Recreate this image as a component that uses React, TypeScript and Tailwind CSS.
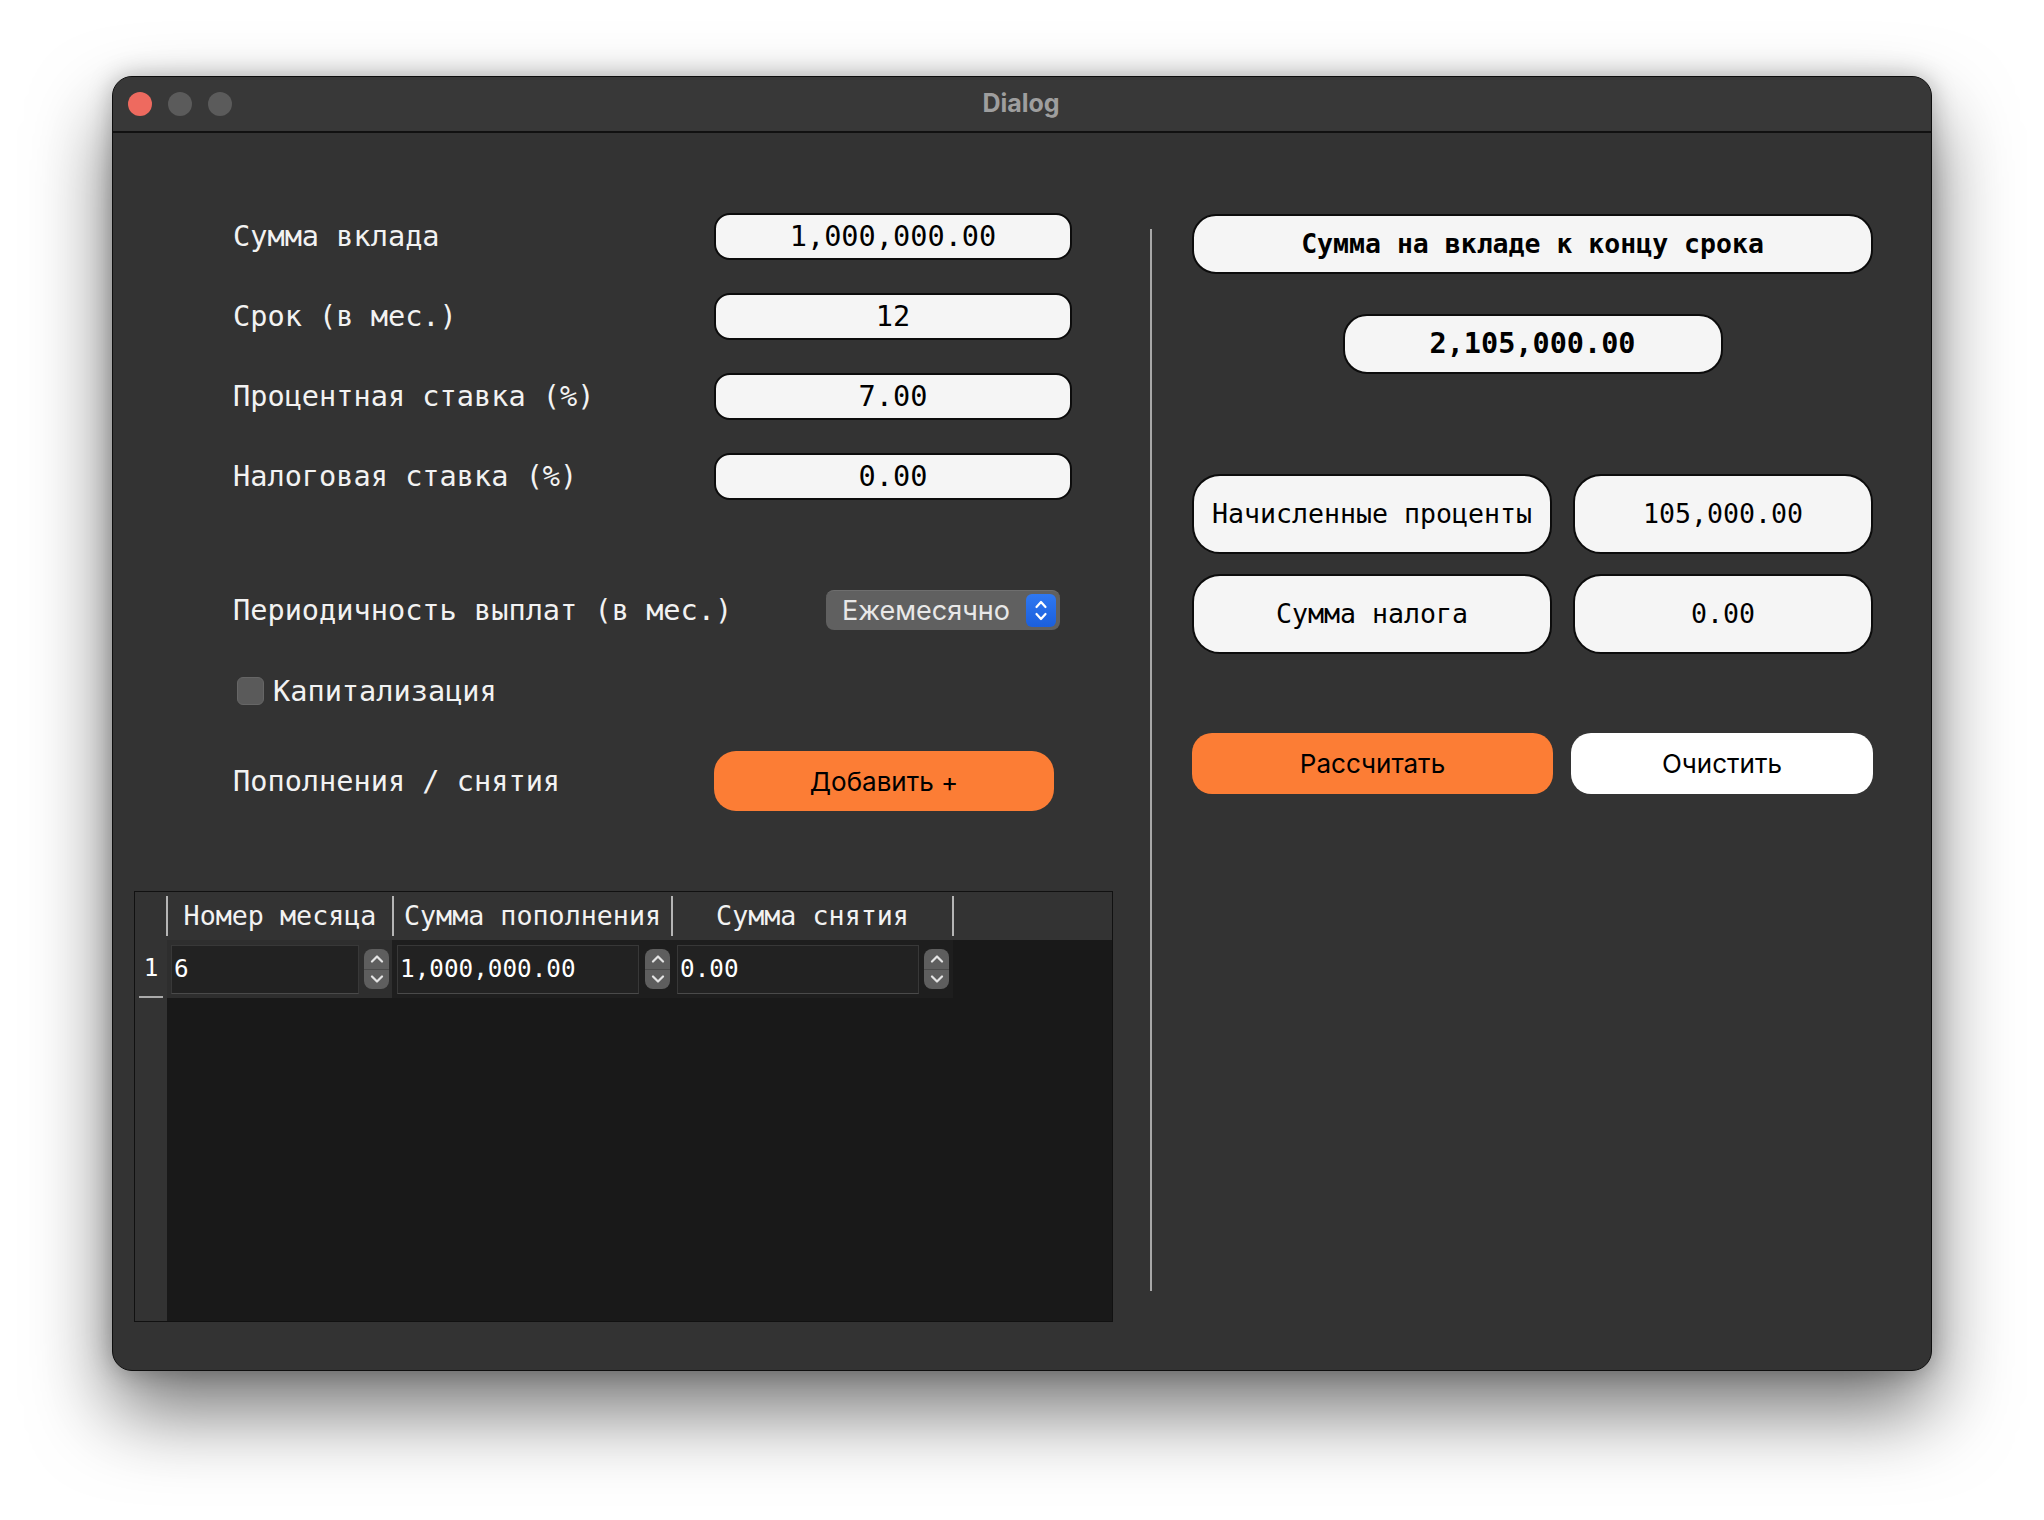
import React from "react";

const mono = "font-['DejaVu_Sans_Mono','Liberation_Mono',monospace]";
const sans = "font-['Inter','Noto_Sans',sans-serif]";

const Field = ({ label, value }: { label: string; value: string }) => (
  <div className="flex items-center h-[47px]">
    <span className="w-[481px] text-[28.6px] text-[#f2f2f2] whitespace-pre">{label}</span>
    <div className="w-[358px] h-[47px] rounded-[16px] border-2 border-[#0c0c0c] bg-[#f5f5f5] flex items-center justify-center text-[28.6px] text-black leading-none">
      {value}
    </div>
  </div>
);

const SpinButtons = () => (
  <div className="w-[25px] h-[40px] rounded-[8px] bg-[#5e5e5e] flex flex-col overflow-hidden">
    <div className="flex-1 flex items-center justify-center border-b border-[#4a4a4a]">
      <svg width="14" height="9" viewBox="0 0 14 9" fill="none">
        <path d="M2 7.5L7 2.5L12 7.5" stroke="#e4e4e4" strokeWidth="2.2" strokeLinecap="round" strokeLinejoin="round" />
      </svg>
    </div>
    <div className="flex-1 flex items-center justify-center">
      <svg width="14" height="9" viewBox="0 0 14 9" fill="none">
        <path d="M2 1.5L7 6.5L12 1.5" stroke="#e4e4e4" strokeWidth="2.2" strokeLinecap="round" strokeLinejoin="round" />
      </svg>
    </div>
  </div>
);

const Editor = ({ value, w }: { value: string; w: string }) => (
  <div className={`${w} h-[49px] bg-[#222] border border-[#383838] border-b-[#4a4a4a] flex items-center pl-[2px] text-[24.3px] text-white`}>
    {value}
  </div>
);

const Box = ({ children, className }: { children: React.ReactNode; className: string }) => (
  <div className={`border-2 border-[#0c0c0c] bg-[#f5f5f5] flex items-center justify-center text-black leading-none whitespace-pre ${className}`}>
    {children}
  </div>
);

export default function App() {
  return (
    <div className={`w-[2044px] h-[1520px] bg-white pl-[112px] pt-[76px] ${mono}`}>
      <div className="w-[1820px] h-[1295px] rounded-[20px] border border-[#0e0e0e] bg-[#333333] shadow-[0_40px_80px_rgba(0,0,0,0.55),0_0_24px_rgba(0,0,0,0.25)] flex flex-col overflow-hidden">
        {/* title bar */}
        <div className="relative h-[56px] shrink-0 bg-[#383838] border-b-2 border-[#111] flex items-center justify-center">
          <div className="absolute left-[15px] top-[15px] flex gap-[16px]">
            <div className="w-[24px] h-[24px] rounded-full bg-[#ee6a5f]" />
            <div className="w-[24px] h-[24px] rounded-full bg-[#5b5b5b]" />
            <div className="w-[24px] h-[24px] rounded-full bg-[#5b5b5b]" />
          </div>
          <span className={`${sans} text-[25px] font-bold text-[#9e9e9e] -ml-[2px]`}>Dialog</span>
        </div>

        {/* content */}
        <div className="flex flex-1">
          {/* left */}
          <div className="w-[1037px] pl-[21px] flex flex-col">
            <div className="pl-[99px] pt-[80px] flex flex-col">
              <Field label="Сумма вклада" value="1,000,000.00" />
              <div className="mt-[33px]">
                <Field label="Срок (в мес.)" value="12" />
              </div>
              <div className="mt-[33px]">
                <Field label="Процентная ставка (%)" value="7.00" />
              </div>
              <div className="mt-[33px]">
                <Field label="Налоговая ставка (%)" value="0.00" />
              </div>

              <div className="mt-[90px] flex items-center h-[40px]">
                <span className="w-[593px] text-[28.6px] text-[#f2f2f2] whitespace-pre">Периодичность выплат (в мес.)</span>
                <div className="w-[234px] h-[40px] rounded-[8px] bg-[#606060] border-t border-[#6e6e6e] flex items-center pl-[16px] pr-[4px]">
                  <span className={`${sans} flex-1 text-[27px] text-[#e8e8e8] leading-none`}>Ежемесячно</span>
                  <div className="w-[30px] h-[33px] rounded-[6px] bg-gradient-to-b from-[#2f78f2] to-[#1b5fdc] flex flex-col items-center justify-center gap-[3px]">
                    <svg width="14" height="10" viewBox="0 0 14 10" fill="none">
                      <path d="M2.5 8L7 3L11.5 8" stroke="white" strokeWidth="2.2" strokeLinecap="round" strokeLinejoin="round" />
                    </svg>
                    <svg width="14" height="10" viewBox="0 0 14 10" fill="none">
                      <path d="M2.5 2L7 7L11.5 2" stroke="white" strokeWidth="2.2" strokeLinecap="round" strokeLinejoin="round" />
                    </svg>
                  </div>
                </div>
              </div>

              <div className="mt-[47px] flex items-center h-[28px]">
                <div className="ml-[4px] w-[27px] h-[28px] rounded-[6px] bg-[#5a5a5a] border border-[#666]" />
                <span className="ml-[9px] text-[28.6px] text-[#f2f2f2]">Капитализация</span>
              </div>

              <div className="mt-[46px] flex items-center h-[60px]">
                <span className="w-[481px] text-[28.6px] text-[#f2f2f2] whitespace-pre">Пополнения / снятия</span>
                <button className={`${sans} w-[340px] h-[60px] rounded-[22px] bg-[#fc7d35] text-[26px] text-black`}>
                  Добавить +
                </button>
              </div>
            </div>

            {/* table */}
            <div className="mt-[80px] w-[979px] h-[431px] border border-[#111] bg-[#191919] flex flex-col">
              <div className="h-[48px] shrink-0 bg-[#333] flex items-center">
                <div className="w-[31px]" />
                <div className="w-[2px] h-[40px] bg-[#b5b5b5]" />
                <div className="w-[224px] text-center text-[26.7px] text-[#f2f2f2]">Номер месяца</div>
                <div className="w-[2px] h-[40px] bg-[#b5b5b5]" />
                <div className="w-[277px] text-center text-[26.7px] text-[#f2f2f2]">Сумма пополнения</div>
                <div className="w-[2px] h-[40px] bg-[#b5b5b5]" />
                <div className="w-[279px] text-center text-[26.7px] text-[#f2f2f2]">Сумма снятия</div>
                <div className="w-[2px] h-[40px] bg-[#b5b5b5]" />
              </div>
              <div className="flex flex-1">
                <div className="w-[32px] bg-[#333] flex flex-col items-center">
                  <div className="h-[56px] flex items-center text-[24.3px] text-white">1</div>
                  <div className="w-[24px] h-[2px] bg-[#aaa]" />
                </div>
                <div className="flex h-[58px]">
                  <div className="w-[225px] bg-[#2e2e2e] flex items-center pl-[4px] gap-[5px]">
                    <Editor value="6" w="w-[188px]" />
                    <SpinButtons />
                  </div>
                  <div className="w-[280px] bg-[#1e1e1e] flex items-center pl-[5px] gap-[6px]">
                    <Editor value="1,000,000.00" w="w-[242px]" />
                    <SpinButtons />
                  </div>
                  <div className="w-[281px] bg-[#1e1e1e] flex items-center pl-[5px] gap-[5px]">
                    <Editor value="0.00" w="w-[242px]" />
                    <SpinButtons />
                  </div>
                </div>
              </div>
            </div>
          </div>

          {/* separator */}
          <div className="w-[2px] mt-[96px] h-[1062px] bg-[#a8a8a8]" />

          {/* right */}
          <div className="pl-[40px] w-[721px] flex flex-col">
            <Box className="mt-[81px] h-[60px] rounded-[24px] text-[26.5px] font-bold">Сумма на вкладе к концу срока</Box>
            <Box className="mt-[40px] self-center w-[380px] h-[60px] rounded-[24px] text-[28.5px] font-bold">2,105,000.00</Box>
            <div className="mt-[100px] flex gap-[21px]">
              <Box className="w-[360px] h-[80px] rounded-[28px] text-[26.6px]">Начисленные проценты</Box>
              <Box className="w-[300px] h-[80px] rounded-[28px] text-[26.6px]">105,000.00</Box>
            </div>
            <div className="mt-[20px] flex gap-[21px]">
              <Box className="w-[360px] h-[80px] rounded-[28px] text-[26.6px]">Сумма налога</Box>
              <Box className="w-[300px] h-[80px] rounded-[28px] text-[26.6px]">0.00</Box>
            </div>
            <div className="mt-[79px] flex gap-[18px]">
              <button className={`${sans} w-[361px] h-[61px] rounded-[20px] bg-[#fc7d35] text-[26px] text-black`}>Рассчитать</button>
              <button className={`${sans} w-[302px] h-[61px] rounded-[20px] bg-white text-[26px] text-black`}>Очистить</button>
            </div>
          </div>
        </div>
      </div>
    </div>
  );
}
